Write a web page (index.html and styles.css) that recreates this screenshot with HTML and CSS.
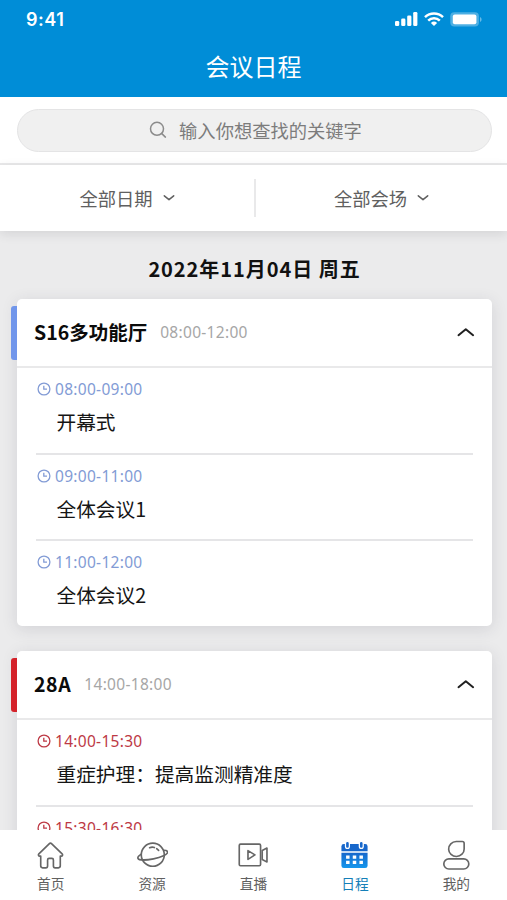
FILE: index.html
```html
<!DOCTYPE html>
<html lang="zh-CN">
<head>
<meta charset="utf-8">
<meta name="viewport" content="width=device-width, initial-scale=1">
<title>会议日程</title>
<link rel="stylesheet" href="styles.css">
</head>
<body>
<svg class="defs" width="0" height="0">
  <symbol id="clock" viewBox="0 0 14 14"><circle cx="7" cy="7" r="5.9"/><path d="M6.8 3.8v3.4h3.2"/></symbol>
  <symbol id="down" viewBox="0 0 12 8"><path d="M1.3 1.8 6 5.7l4.7-3.9"/></symbol>
  <symbol id="up" viewBox="0 0 18 10"><path d="m1.5 8.2 7.3-6 7.3 6"/></symbol>
</svg>
<div class="app">
  <header class="top">
    <div class="status">
      <span class="status-time">9:41</span>
      <div class="status-icons">
        <svg width="23" height="15" viewBox="0 0 23 15" fill="#fff"><rect x="0" y="9" width="4.2" height="5" rx="1.3"/><rect x="6.2" y="6.5" width="4.2" height="7.5" rx="1.3"/><rect x="12.2" y="3.4" width="4.2" height="10.6" rx="1.3"/><rect x="18.2" y="0" width="4.2" height="14" rx="1.3"/></svg>
        <svg class="wifi" width="20" height="15" viewBox="0 0 20 15" fill="none" stroke="#fff" stroke-width="2.5"><path d="M1 5.2a13 13 0 0 1 18 0"/><path d="M4.2 8.6a8.3 8.3 0 0 1 11.6 0"/><path d="M6.9 11a4.6 4.6 0 0 1 6.2 0L10 14.1z" fill="#fff" stroke="none"/></svg>
        <svg width="32" height="15" viewBox="0 0 32 15"><rect x=".3" y=".3" width="28.6" height="14.2" rx="4" fill="#fff" fill-opacity=".3"/><rect x="2.8" y="2.6" width="23.6" height="9.6" rx="2" fill="#fff"/><path d="M30 5v5c1-.4 1.6-1.4 1.6-2.5S31 5.4 30 5z" fill="#fff" fill-opacity=".4"/></svg>
      </div>
    </div>
    <h1 class="title">会议日程</h1>
  </header>

  <div class="search-wrap">
    <div class="search">
      <svg width="18" height="18" viewBox="0 0 18 18" fill="none" stroke="#8b8b8b" stroke-width="1.5" stroke-linecap="round"><circle cx="8" cy="7.8" r="6.5"/><path d="m12.8 12.6 3.6 3.5"/></svg>
      <span>输入你想查找的关键字</span>
    </div>
  </div>

  <div class="filters">
    <div class="filter"><span>全部日期</span><svg class="down"><use href="#down"/></svg></div>
    <div class="filter second"><span>全部会场</span><svg class="down"><use href="#down"/></svg></div>
  </div>

  <main class="content">
    <h2 class="date">2022年11月04日 周五</h2>

    <section class="card blue">
      <div class="card-head"><h3>S16多功能厅</h3><span class="range">08:00-12:00</span><svg class="up"><use href="#up"/></svg></div>
      <div class="items">
        <div class="item"><div class="time"><svg class="clock"><use href="#clock"/></svg><span>08:00-09:00</span></div><p>开幕式</p></div>
        <div class="item"><div class="time"><svg class="clock"><use href="#clock"/></svg><span>09:00-11:00</span></div><p>全体会议1</p></div>
        <div class="item"><div class="time"><svg class="clock"><use href="#clock"/></svg><span>11:00-12:00</span></div><p>全体会议2</p></div>
      </div>
    </section>

    <section class="card red">
      <div class="card-head"><h3 class="latin">28A</h3><span class="range">14:00-18:00</span><svg class="up"><use href="#up"/></svg></div>
      <div class="items">
        <div class="item"><div class="time"><svg class="clock"><use href="#clock"/></svg><span>14:00-15:30</span></div><p>重症护理：提高监测精准度</p></div>
        <div class="item"><div class="time"><svg class="clock"><use href="#clock"/></svg><span>15:30-16:30</span></div></div>
      </div>
    </section>
  </main>

  <nav class="tabs">
    <div class="tab">
      <svg viewBox="0 0 32 32"><path d="M17.3 4 28 14.4c.9.9.4 2.3-.9 2.3h-1v10c0 1.3-.6 2-1.900 2h-3.400c-1.200 0-1.800-.6-1.800-1.800v-6.200c0-1.200-.6-1.700-1.500-1.700h-3c-.9 0-1.500.5-1.500 1.700v6.200c0 1.200-.6 1.800-1.800 1.800H7.800c-1.300 0-1.900-.7-1.900-2v-10h-1c-1.300 0-1.800-1.400-.9-2.300L14.600 4c.8-.8 1.900-.8 2.700 0z"/></svg>
      <span>首页</span>
    </div>
    <div class="tab">
      <svg viewBox="0 0 32 32"><circle cx="16.300" cy="15.200" r="11.900"/><path d="M4.300 14.600C1.600 16.300.6 18 1 19c.8 1.900 8 2 16 .5s14.700-4.600 14.600-7c-.1-1.300-1.700-1.900-4-1.900"/><path d="M13 8c1.700-.7 3.500-.7 5-.2M20.300 9l2 1.700"/></svg>
      <span>资源</span>
    </div>
    <div class="tab">
      <svg viewBox="0 0 32 32"><rect x="1.300" y="4.300" width="22" height="22.300" rx="1.300"/><path d="m10.300 11 7.200 4.400-7.200 4.600z"/><path d="m25 10.800 4.900-2.500v14.300L25 20.200z"/></svg>
      <span>直播</span>
    </div>
    <div class="tab active">
      <svg class="calendar" viewBox="0 0 32 32">
        <defs><linearGradient id="sky" x2="0" y2="1"><stop stop-color="#1767cb"/><stop offset="1" stop-color="#1597ed"/></linearGradient></defs>
        <path d="M5 4.200h22q2.500 0 2.500 2.500v4.800h-27V6.700Q2.500 4.200 5 4.200z" fill="#1767cb"/><path d="M2.500 13.100h27v13.400q0 2.500-2.500 2.500H5q-2.500 0-2.500-2.500z" fill="url(#sky)"/>
        <g fill="#1767cb" stroke="#fff" stroke-width="1.300"><rect x="6.700" y="1.400" width="4" height="7.300" rx="2"/><rect x="21" y="1.400" width="4" height="7.300" rx="2"/></g>
        <path d="M7.300 16h3.600v3.400H7.300zm6.900 0h3.600v3.400h-3.600zm6.900 0h3.600v3.400h-3.600zM7.300 21.300h3.600v3.400H7.300zm6.900 0h3.600v3.400h-3.600zm6.900 0h3.600v3.400h-3.600z" fill="#fff"/>
      </svg>
      <span>日程</span>
    </div>
    <div class="tab">
      <svg viewBox="0 0 32 32"><path d="M15.700 1.600H22q1.900 0 1.900 1.900v5.700a8 7.700 0 1 1-8.200-7.600z"/><rect x="2.900" y="19.500" width="25.800" height="10.400" rx="5.200"/></svg>
      <span>我的</span>
    </div>
  </nav>
</div>
</body>
</html>
```
FILE: styles.css
```css
* { box-sizing: border-box; }
body, h1, h2, h3, p { margin: 0; }
body {
  height: 900px;
  overflow: hidden;
  font-family: "Noto Sans CJK SC", sans-serif;
  background: #ebebec;
}
svg { display: block; flex: none; }
.defs { position: absolute; }
.app { height: 900px; display: flex; flex-direction: column; }

.top { height: 97px; flex: none; background: #008dd7; color: #fff; }
.status { height: 39px; padding: 0 26px; display: flex; align-items: center; justify-content: space-between; }
.status-time { font: 600 18px/20px Inter, sans-serif; letter-spacing: .5px; }
.status-icons { display: flex; align-items: center; margin-right: -1px; }
.wifi { margin: 0 6px; }
.title { font-size: 24px; line-height: 53px; font-weight: 400; text-align: center; }

.search-wrap { height: 68px; flex: none; padding: 12px 15px 0 17px; background: #fff; border-bottom: 2px solid #e9e9ea; }
.search {
  height: 43px; padding: 0 0 1px 2px; border: 1.5px solid #e4e4e5; border-radius: 22px; background: #f0f0f0;
  display: flex; align-items: center; justify-content: center; gap: 12px;
  font-size: 18.3px; line-height: 26px; color: #7c7c7c;
}
.filters {
  height: 66px; flex: none; display: flex; align-items: center; background: #fff;
  box-shadow: 0 3px 10px rgba(50, 50, 60, .12); z-index: 1;
}
.filter { width: 254px; height: 38px; padding-bottom: 1px; display: flex; align-items: center; justify-content: center; gap: 10px; font-size: 18.3px; color: #606060; }
.filter.second { width: 253px; border-left: 2px solid #e9e9ea; }
.down { width: 12px; height: 8px; fill: none; stroke: #606060; stroke-width: 1.5; stroke-linecap: round; stroke-linejoin: round; }

.content { flex: 1; min-height: 0; overflow: hidden; padding: 0 15px 0 17px; }
.date { margin: 23px 0 15px; font-size: 20px; line-height: 30px; font-weight: 700; letter-spacing: .95px; text-align: center; color: #111; }
.card { position: relative; height: 327px; margin-bottom: 25px; border-radius: 5px; background: #fff; box-shadow: 0 3px 16px rgba(50, 50, 70, .13); }
.card::before { content: ""; position: absolute; left: -6px; top: 7px; width: 6px; height: 54px; border-radius: 3px 0 0 3px; background: var(--bar); }
.blue { --bar: #7196eb; --tone: #829bd5; }
.red { --bar: #d4222a; --tone: #bd3945; }
.card-head { height: 69px; border-bottom: 2px solid #e9e9ea; display: flex; align-items: center; padding: 0 17px 1px; }
.card-head h3 { font-size: 19.5px; line-height: 28px; color: #0b0b0b; }
.card-head .latin { letter-spacing: .6px; }
.range { margin-left: 13px; font-family: "Noto Sans", sans-serif; font-size: 15.5px; letter-spacing: .3px; color: #a6a6a6; }
.up { width: 18px; height: 10px; margin-left: auto; fill: none; stroke: #202020; stroke-width: 2; stroke-linecap: round; stroke-linejoin: round; }
.items { padding: 0 19px; }
.item { height: 85px; padding-top: 10px; }
.item + .item { height: 86.3px; border-top: 2px solid #e5e5e7; }
.time { display: flex; align-items: center; gap: 4px; height: 22px; color: var(--tone); font: 15.5px/22px "Noto Sans", sans-serif; letter-spacing: .3px; }
.clock { width: 14px; height: 14px; margin-left: 1px; fill: none; stroke: currentColor; stroke-width: 1.3; }
.item p { margin: 8px 0 0 20.5px; font-size: 19.7px; line-height: 28px; color: #151515; }

.tabs { height: 70px; flex: none; display: flex; background: #fff; z-index: 1; }
.tab { flex: 1; display: flex; flex-direction: column; align-items: center; padding-top: 10px; font-size: 13.7px; line-height: 20px; color: #606060; }
.tab svg { width: 31px; height: 31px; margin-bottom: 2px; fill: none; stroke: #666; stroke-width: 1.7; stroke-linecap: round; stroke-linejoin: round; }
.tab .calendar { stroke: none; }
.tab.active { color: #147fb8; }
```
